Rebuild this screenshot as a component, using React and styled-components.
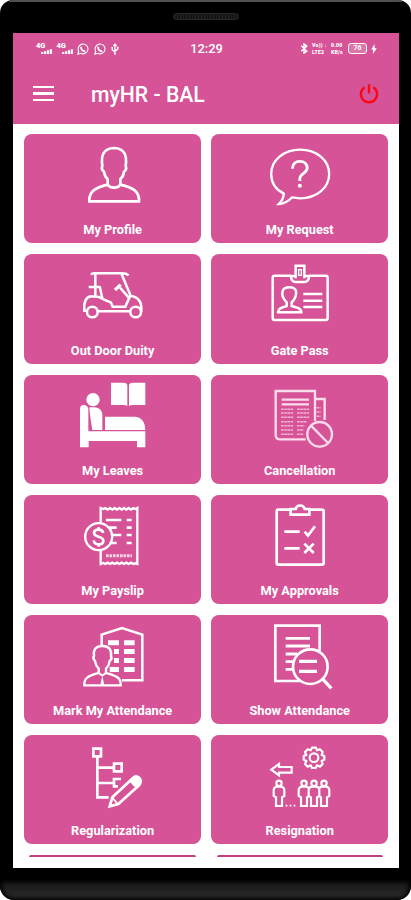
import React from 'react';
import styled, { createGlobalStyle } from 'styled-components';

const PINK = '#d55396';

export default function App() {
  return (
    <>
      <GlobalStyle />
      <Phone>
        <Earpiece>
          <Speaker />
        </Earpiece>
        <Screen>
          <StatusBar />
          <Toolbar>
            <MenuButton aria-label="Menu">
              <span />
              <span />
              <span />
            </MenuButton>
            <Title>myHR - BAL</Title>
            <PowerButton aria-label="Log out">
              <svg width="22" height="22" viewBox="0 0 22 22" fill="none" stroke="#fb0713" strokeWidth="2.3">
                <path d="M11 1.3V10.5" />
                <path d="M6.7 4.3a8.1 8.1 0 1 0 8.6 0" />
              </svg>
            </PowerButton>
          </Toolbar>
          <Grid>
            {tiles.map(({ label, Icon }) => (
              <Tile key={label}>
                <Icon />
                <TileLabel>{label}</TileLabel>
              </Tile>
            ))}
          </Grid>
          <Peek>
            <PeekTile />
            <PeekTile />
          </Peek>
        </Screen>
        <Chin />
      </Phone>
    </>
  );
}

function StatusBar() {
  return (
    <StyledStatusBar>
      <StatusGroup>
        <Signal />
        <Signal />
        <WhatsApp />
        <WhatsApp />
        <svg width="10" height="12" viewBox="0 0 10 13" fill="none" stroke="#fff" strokeWidth="1.4">
          <path d="M5 12V2M3.3 3.5 5 1.2l1.7 2.3M5 9.8 2 7.5V5M5 8.8l3-2.2V4.4" />
          <path d="M4 11h2v1.5H4zM1.2 4.2h1.6v1.6H1.2zM7.2 4h1.6v1.6H7.2z" fill="#fff" stroke="none" />
        </svg>
      </StatusGroup>
      <Clock>12:29</Clock>
      <StatusGroup $right>
        <svg width="8" height="11" viewBox="0 0 8 12" fill="none" stroke="#fff" strokeWidth="1.6">
          <path d="m1 3 6 5.8L4 11V1l3 2.3L1 9" />
        </svg>
        <Tiny $width={15}>
          <span>Vo)) ↓</span>
          <span>LTE2</span>
        </Tiny>
        <Tiny $width={13}>
          <span>0.00</span>
          <span>KB/s</span>
        </Tiny>
        <Battery>76</Battery>
        <svg width="6" height="10" viewBox="0 0 6 10" fill="#fff">
          <path d="M3.6 0 .2 5.6h2L1.8 10 5.8 4.2H3.6z" />
        </svg>
      </StatusGroup>
    </StyledStatusBar>
  );
}

function Signal() {
  return (
    <SignalBox>
      <span>4G</span>
      <svg width="11" height="5" viewBox="0 0 11 5" fill="#fff">
        <path d="M0 3h2.2v2H0zM2.9 2.2h2.2V5H2.900zM5.8 1.2H8V5H5.8zM8.7.3h2.200V5H8.7z" />
      </svg>
    </SignalBox>
  );
}

function WhatsApp() {
  return (
    <svg width="12" height="12" viewBox="0 0 12 12" fill="none" stroke="#fff">
      <path d="m.9 11.2.8-3A4.9 4.9 0 1 1 3.8 10.3z" strokeWidth="1.1" />
      <path d="M4 3.7c0 2.6 1.8 4.5 4.4 4.7" strokeWidth="1.7" />
    </svg>
  );
}

// icon canvases are drawn at 3 units per pixel
function LeftIcon({ children }) {
  return <TileIcon viewBox="158 20 240 220">{children}</TileIcon>;
}

function RightIcon({ children }) {
  return <TileIcon viewBox="719 20 240 220">{children}</TileIcon>;
}

function ProfileIcon() {
  return (
    <LeftIcon>
      <g strokeWidth="8">
        <path d="M262 166v-19c-7-6-10-14-11-23-6-4-8-10-5-17-5-34 5-53 35-54 30 1 40 20 35 54 3 7 1 13-5 17-1 9-4 17-11 23v19" />
        <path d="M262 163c-35 9-57 18-55 50h149c2-32-20-41-56-50-8 12-30 12-38 0z" />
      </g>
    </LeftIcon>
  );
}

function RequestIcon() {
  return (
    <TileIcon viewBox="161.5 20 240 220">
      <path
        strokeWidth="7"
        d="M233 190c-28-14-38-34-38-59 0-42 38-73 87-73s87 31 87 73-38 73-87 73c-10 0-16-2-24-3-11 12-25 19-40 20 10-10 14-18 15-31z"
      />
      <path strokeWidth="8.5" d="M259 115c0-13 9-22 22-22s22 8 22 20c0 16-22 16-22 32v7" />
      <circle cx="281" cy="166" r="6" fill="#fff" stroke="none" />
    </TileIcon>
  );
}

function CartIcon() {
  return (
    <LeftIcon>
      <g strokeWidth="7.5">
        <path d="M212 73q3-4 8-4h86q12 0 19 6M225 72v66M304 72l26 62M232 183h97M205 110h33M238 108l8 36" />
        <path d="M199 181h-7c-2-22 3-40 20-43l24 2c9 6 25 12 36 17l5 12h38l15-33c22 3 35 18 33 45h-3" />
        <path d="M328 145 299 112" />
        <path d="m284 119 17-16" strokeWidth="10" />
        <circle cx="216" cy="185" r="16" />
        <circle cx="346" cy="185" r="16" />
      </g>
    </LeftIcon>
  );
}

function GatePassIcon() {
  return (
    <RightIcon>
      <g strokeWidth="7.5">
        <path d="M811 76h-48q-6 0-6 6v121q0 6 6 6h153q6 0 6-6V82q0-6-6-6h-48" />
        <path d="M826 84V46h26v38M826 77h-14c0 12 5 18 14 18h26c9 0 14-6 14-18h-14" />
        <path d="M835 58h8v17h-8z" strokeWidth="4" />
        <path d="M849 131h57M849 151h57M849 170h57" />
        <path d="M799 167v-11c-11-10-15-24-12-34 4-15 36-15 40 0 2 11-3 26-13 34v11c18 5 29 8 29 19h-70c0-11 10-14 26-19z" />
      </g>
    </RightIcon>
  );
}

function LeavesIcon() {
  return (
    <LeftIcon>
      <g fill="#fff" stroke="none">
        <circle cx="218" cy="88" r="20" />
        <path d="M179 231V115q0-11 11-11t14 11v68h171v48h-25v-19H205v19z" />
        <path d="M207 111c20-2 38 2 39 22v46h-30c-3-22-7-38-9-68z" />
        <path d="M254 179v-40h92q28 4 29 40z" />
        <path d="M272 37h38q9 0 11 6v65q-5-5-14-4h-35zM375 37h-38q-9 0-11 6v65q5-5 14-4h35z" />
      </g>
    </LeftIcon>
  );
}

function CancellationIcon() {
  return (
    <RightIcon>
      <g stroke="#fbdcec" strokeWidth="7">
        <path d="M856 207h-79q-11-1-11-12V62h118v90M886 86h27v63" />
        <path d="M784 88h82M784 102h82" />
        <g strokeWidth="4.5" strokeDasharray="8 1.5" stroke="#f3b4d4">
          <path d="M782 117h37M782 128h37M782 141h37M782 154h37M782 166h37M782 179h37M782 192h37" />
          <path d="M830 117h37M830 128h37M830 141h37M830 154h30M830 166h22M830 179h20M830 192h20M889 112h12M889 125h12M889 138h12" />
        </g>
        <circle cx="898" cy="192" r="37" fill={PINK} />
        <path d="m872 166 52 53" />
      </g>
    </RightIcon>
  );
}

function PayslipIcon() {
  return (
    <LeftIcon>
      <path strokeWidth="7" d="M241 96V50l8 3 6-3 7 5 7-5 7 5 7-5 7 5 7-5 7 5 7-5 7 5 7-5 7 5 7-5 6 3 6-3v168l-6-2-6 2-7-4-7 4-7-4-7 4-7-4-7 4-7-4-7 4-7-4-7 4-7-4-7 4-6-3-8 3V176" />
      <path strokeWidth="8" d="M257 86h46M257 109h32M257 131h46M257 155h32M319 86h15M319 109h15M319 131h15M319 155h15" />
      <path strokeWidth="9" strokeDasharray="8 2.5" stroke="#f9d3e6" d="M257 193h78" />
      <circle cx="235" cy="136" r="40.5" fill={PINK} strokeWidth="7" />
      <path strokeWidth="8" d="M249 125c-2-7-7-10-14-10-8 0-14 4-14 10 0 14 28 8 28 23 0 7-6 11-14 11s-14-4-15-12M235 108v8M235 158v8" />
    </LeftIcon>
  );
}

function ApprovalsIcon() {
  return (
    <RightIcon>
      <g strokeWidth="8">
        <path d="M811 55h-38q-4 0-4 5v155q0 5 5 5h131q5 0 5-5V60q0-5-5-5h-37" />
        <path d="M811 53h15c3-14 24-14 27 0h14v17h-56z" />
        <path d="M792 121h46M792 171h46" />
        <path d="m853 121 10 12 21-28M852 157l28 28M880 157l-28 28" />
      </g>
    </RightIcon>
  );
}

function MarkAttendanceIcon() {
  return (
    <LeftIcon>
      <path strokeWidth="7.5" d="M244 104V70l61-20 61 20v137h-61" />
      <path
        fill="#fff"
        stroke="none"
        d="M263 87h33v15h-33zM311 87h32v15h-32zM281 113h15v15h-15zM311 113h32v15h-32zM281 140h15v15h-15zM311 140h32v15h-32zM268 167h28v15h-28zM311 167h32v15h-32z"
      />
      <path
        fill={PINK}
        strokeWidth="7"
        d="M235 185v-13c-7-7-10-15-11-23-5-5-6-11-3-15-3-19 6-30 25-30s29 11 26 30c3 5 1 11-4 15-1 9-5 17-11 23v13c27 8 46 12 44 37H192c-2-25 17-29 43-37z"
      />
      <path strokeWidth="6" d="m235 185 11 8 11-8" />
      <path fill="#fff" stroke="none" d="m246 193 6 29h-12z" />
    </LeftIcon>
  );
}

function ShowAttendanceIcon() {
  return (
    <RightIcon>
      <path strokeWidth="8" d="M898 118V43H765v166h74" />
      <path strokeWidth="8.5" d="M796 81h73M796 104h73M796 128h35M796 151h22M796 174h22" />
      <circle cx="870" cy="166" r="52" fill={PINK} strokeWidth="8" />
      <path strokeWidth="10" d="M836 150h54M836 180h54M906 202l27 29" />
    </RightIcon>
  );
}

function RegularizationIcon() {
  return (
    <LeftIcon>
      <g strokeWidth="8">
        <path d="M219 52h23v23h-23zM231 76v122h34M231 109h48M231 155h48M281 97h23v23h-23z" />
        <path d="M302 143h-21v22h12" />
        <path d="m268 225 8-27 61-57c11-15 34 3 20 20l-63 57z" fill={PINK} />
        <path d="m276 199 17 20" strokeWidth="5" />
      </g>
      <path fill="#fff" stroke="none" d="m266 227 4-13 10 10zM326 149l13-12q21-6 20 18l-14 14z" />
    </LeftIcon>
  );
}

function Person({ x }) {
  return (
    <g transform={`translate(${x} 0)`}>
      <circle cx="0" cy="156" r="8" />
      <path fill={PINK} d="M-7 166h14q10 2 9 14v14l-7 4v26H-9v-26l-7-4v-14q-1-12 9-14z" />
    </g>
  );
}

function ResignationIcon() {
  return (
    <RightIcon>
      <g strokeWidth="6.5">
        <path d="m753 115 23-17v9h38v17h-38v8z" />
        <path
          strokeLinejoin="round"
          d="m875 49 12 0 3 8 9-3 8 8-3 9 8 3v11l-8 4 3 9-8 8-9-4-4 8h-11l-4-8-9 4-8-8 4-9-8-4V74l8-3-4-9 8-8 9 3z"
        />
        <circle cx="881" cy="79" r="13" />
        <Person x={776} />
        <Person x={851} />
        <Person x={911} />
        <Person x={881} />
      </g>
      <path strokeWidth="5" strokeDasharray="5 7" d="M796 223h30" />
    </RightIcon>
  );
}

const tiles = [
  { label: 'My Profile', Icon: ProfileIcon },
  { label: 'My Request', Icon: RequestIcon },
  { label: 'Out Door Duity', Icon: CartIcon },
  { label: 'Gate Pass', Icon: GatePassIcon },
  { label: 'My Leaves', Icon: LeavesIcon },
  { label: 'Cancellation', Icon: CancellationIcon },
  { label: 'My Payslip', Icon: PayslipIcon },
  { label: 'My Approvals', Icon: ApprovalsIcon },
  { label: 'Mark My Attendance', Icon: MarkAttendanceIcon },
  { label: 'Show Attendance', Icon: ShowAttendanceIcon },
  { label: 'Regularization', Icon: RegularizationIcon },
  { label: 'Resignation', Icon: ResignationIcon },
];

const GlobalStyle = createGlobalStyle`
  * {
    box-sizing: border-box;
  }

  body {
    margin: 0;
    background: #fff;
    font-family: Roboto, sans-serif;
  }
`
const Phone = styled.div`
  display: flex;
  flex-direction: column;
  width: 411px;
  height: 900px;
  overflow: hidden;
  background: #000;
  border-radius: 13px 13px 14px 14px;
`
const Earpiece = styled.div`
  display: flex;
  justify-content: center;
  flex: none;
  height: 33px;
  padding-top: 11px;
  margin: 0 9px;
  border-top: 2px solid #505050;
`
const Speaker = styled.div`
  width: 66px;
  height: 7px;
  border-radius: 4px;
  border: 1px solid #292929;
  background: repeating-linear-gradient(90deg, #222 0 1px, #141414 1px 3px);
`
const Screen = styled.main`
  display: flex;
  flex-direction: column;
  flex: none;
  height: 835px;
  margin: 0 12px 0 13px;
  background: #fff;
  overflow: hidden;
`
const Chin = styled.div`
  flex: none;
  height: 20px;
  margin-top: 12px;
  background: linear-gradient(#0c0c0c, #1c1c1c 30%, #262626 75%, #1c1c1c);
  border-radius: 0 0 14px 14px;
  box-shadow: inset 2px 0 4px #000, inset -2px 0 4px #000;
`
const StyledStatusBar = styled.div`
  display: grid;
  grid-template-columns: 1fr auto 1fr;
  align-items: center;
  flex: none;
  height: 31px;
  padding: 0 22px 0 23px;
  background: ${PINK};
  color: #fff;
`
const StatusGroup = styled.div`
  display: flex;
  align-items: center;
  justify-content: ${({ $right }) => ($right ? 'flex-end' : 'flex-start')};
  gap: ${({ $right }) => ($right ? '4px' : '4.5px')};
`
const SignalBox = styled.div`
  display: flex;
  flex-direction: column;
  width: 16px;
  font-size: 7.5px;
  font-weight: 900;
  line-height: 6px;

  svg {
    align-self: flex-end;
  }
`
const Clock = styled.div`
  font-size: 12.8px;
  font-weight: 500;
`
const Tiny = styled.div`
  display: flex;
  flex-direction: column;
  width: ${({ $width }) => $width}px;
  font-size: 5.2px;
  font-weight: 900;
  line-height: 6.5px;
  letter-spacing: 0.2px;
  white-space: nowrap;
`
const Battery = styled.div`
  width: 19px;
  height: 11px;
  border: 1px solid #fff;
  border-radius: 3px;
  background: rgba(255, 255, 255, 0.2);
  font-size: 7px;
  font-weight: 700;
  line-height: 9px;
  text-align: center;
`
const Toolbar = styled.header`
  display: flex;
  align-items: center;
  flex: none;
  height: 60px;
  padding: 0 19px 1px 20px;
  background: ${PINK};
`
const MenuButton = styled.button`
  display: flex;
  flex-direction: column;
  gap: 4px;
  width: 21px;
  padding: 0;
  border: 0;
  background: none;

  span {
    height: 2.5px;
    background: #fff;
  }
`
const Title = styled.h1`
  margin: 1px auto 0 37px;
  color: #fff;
  font-size: 21.2px;
  font-weight: 500;
`
const PowerButton = styled.button`
  padding: 0;
  border: 0;
  background: none;

  svg {
    display: block;
  }
`
const Grid = styled.section`
  display: grid;
  grid-template-columns: repeat(2, 1fr);
  grid-auto-rows: 109.2px;
  gap: 11px 10.5px;
  padding: 10.3px 11px 0 11.3px;
`
const Tile = styled.article`
  display: flex;
  flex-direction: column;
  align-items: center;
  padding-top: 2.7px;
  background: ${PINK};
  border-radius: 8px;
`
const TileIcon = styled.svg`
  flex: none;
  width: 80px;
  height: 73.3px;
  fill: none;
  stroke: #fff;
`
const TileLabel = styled.span`
  margin-top: 12.2px;
  color: #fff;
  font-size: 12.75px;
  font-weight: 700;
  line-height: 16px;
  white-space: nowrap;
`
const Peek = styled.div`
  display: grid;
  grid-template-columns: repeat(2, 1fr);
  gap: 21px;
  padding: 10.3px 16px 0;
`
const PeekTile = styled.div`
  height: 2.3px;
  background: #bd4082;
  border-radius: 3px 3px 0 0;
`
